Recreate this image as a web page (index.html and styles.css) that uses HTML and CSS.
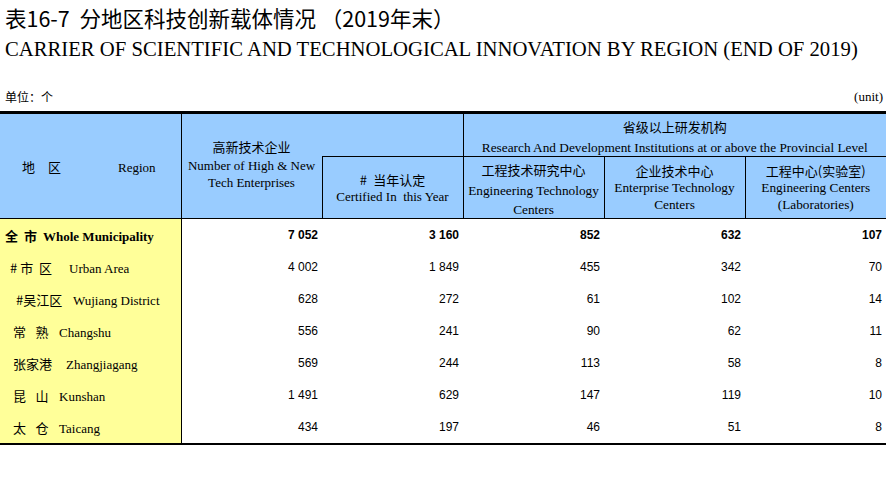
FILE: index.html
```html
<!DOCTYPE html>
<html lang="zh-CN">
<head>
<meta charset="utf-8">
<title>表16-7 分地区科技创新载体情况（2019年末）</title>
<link rel="stylesheet" href="styles.css">
</head>
<body>
<div class="page">
  <h1 class="title-cn">表16-7&nbsp;&nbsp;分地区科技创新载体情况&nbsp;（2019年末）</h1>
  <h2 class="title-en">CARRIER OF SCIENTIFIC AND TECHNOLOGICAL INNOVATION BY REGION (END OF 2019)</h2>
  <div class="unit-row">
    <span class="unit-cn">单位：个</span>
    <span class="unit-en">(unit)</span>
  </div>
  <table class="data">
    <colgroup>
      <col class="c-region">
      <col class="c-num">
      <col class="c-num">
      <col class="c-num">
      <col class="c-num">
      <col class="c-last">
    </colgroup>
    <thead>
      <tr class="h1">
        <th rowspan="2" class="h-region">
          <span class="hr-cn">地　区</span><span class="hr-en">Region</span>
        </th>
        <th rowspan="2" class="h-hightech">
          <span class="cn">高新技术企业</span>
          <span class="en">Number of High &amp; New</span>
          <span class="en">Tech Enterprises</span>
        </th>
        <th class="h-empty"></th>
        <th colspan="3" class="h-rd">
          <span class="cn">省级以上研发机构</span>
          <span class="en">Research And Development Institutions at or above the Provincial Level</span>
        </th>
      </tr>
      <tr class="h2">
        <th class="h-cert">
          <span class="cn">#&ensp;当年认定</span>
          <span class="en">Certified In&nbsp; this Year</span>
        </th>
        <th class="h-sub h-eng">
          <span class="cn">工程技术研究中心</span>
          <span class="en">Engineering Technology</span>
          <span class="en">Centers</span>
        </th>
        <th class="h-sub">
          <span class="cn">企业技术中心</span>
          <span class="en">Enterprise Technology</span>
          <span class="en">Centers</span>
        </th>
        <th class="h-sub">
          <span class="cn">工程中心(实验室)</span>
          <span class="en">Engineering Centers</span>
          <span class="en">(Laboratories)</span>
        </th>
      </tr>
    </thead>
    <tbody>
      <tr class="total">
        <td class="region r-total"><span class="rcn">全&nbsp;&nbsp;市</span><span class="ren">Whole Municipality</span></td>
        <td>7 052</td><td>3 160</td><td>852</td><td>632</td><td>107</td>
      </tr>
      <tr>
        <td class="region r-urban"><span class="rcn">#&nbsp;市&nbsp;&nbsp;区</span><span class="ren">Urban Area</span></td>
        <td>4 002</td><td>1 849</td><td>455</td><td>342</td><td>70</td>
      </tr>
      <tr>
        <td class="region r-wujiang"><span class="rcn">#吴江区</span><span class="ren">Wujiang District</span></td>
        <td>628</td><td>272</td><td>61</td><td>102</td><td>14</td>
      </tr>
      <tr>
        <td class="region r-two"><span class="rcn">常&ensp;&nbsp;熟</span><span class="ren">Changshu</span></td>
        <td>556</td><td>241</td><td>90</td><td>62</td><td>11</td>
      </tr>
      <tr>
        <td class="region r-zjg"><span class="rcn">张家港</span><span class="ren">Zhangjiagang</span></td>
        <td>569</td><td>244</td><td>113</td><td>58</td><td>8</td>
      </tr>
      <tr>
        <td class="region r-two"><span class="rcn">昆&ensp;&nbsp;山</span><span class="ren">Kunshan</span></td>
        <td>1 491</td><td>629</td><td>147</td><td>119</td><td>10</td>
      </tr>
      <tr>
        <td class="region r-two"><span class="rcn">太&ensp;&nbsp;仓</span><span class="ren">Taicang</span></td>
        <td>434</td><td>197</td><td>46</td><td>51</td><td>8</td>
      </tr>
    </tbody>
  </table>
</div>
</body>
</html>
```
FILE: styles.css
```css
html, body {
  margin: 0;
  padding: 0;
  background: #ffffff;
  color: #000000;
}

body {
  font-family: "Liberation Serif", "Times New Roman", serif;
}

.page {
  width: 886px;
  padding-top: 5px;
}

.title-cn {
  margin: 0 0 0 5px;
  font-family: "Noto Sans CJK SC", "Noto Sans", sans-serif;
  font-weight: normal;
  font-size: 21.5px;
  line-height: 25px;
  height: 25px;
  white-space: nowrap;
}

.title-en {
  margin: 7px 0 0 5px;
  font-family: "Liberation Serif", "Times New Roman", serif;
  font-weight: normal;
  font-size: 20.7px;
  line-height: 24px;
  height: 24px;
  white-space: nowrap;
}

.unit-row {
  display: flex;
  justify-content: space-between;
  align-items: center;
  height: 18px;
  margin-top: 27px;
  padding: 0 3px 0 5px;
  line-height: 18px;
}

.unit-cn {
  font-family: "Noto Sans CJK SC", sans-serif;
  font-size: 12px;
}

.unit-en {
  font-family: "Liberation Serif", serif;
  font-size: 13px;
}

.data {
  margin-top: 5px;
  width: 886px;
  table-layout: fixed;
  border-collapse: collapse;
  border-top: 3px solid #000;
  border-bottom: 2px solid #000;
}

.c-region { width: 181px; }
.c-num { width: 141px; }
.c-last { width: 141px; }

.data th {
  background: #99ccff;
  font-weight: normal;
  padding: 0;
  text-align: center;
  vertical-align: middle;
  border: 1px solid #000;
  border-top: none;
}

.data th:last-child,
.h2 th:last-child {
  border-right: none;
}

.data .h1 { height: 44px; }
.data .h2 { height: 62px; }

.data th .cn {
  display: block;
  font-family: "Noto Sans CJK SC", sans-serif;
  font-size: 13px;
  line-height: 17px;
}

.data th .en {
  display: block;
  font-family: "Liberation Serif", serif;
  font-size: 13.3px;
  line-height: 17px;
  white-space: nowrap;
}

.h-region {
  text-align: left !important;
  padding-left: 22px !important;
  border-left: none !important;
}

.hr-cn {
  font-family: "Noto Sans CJK SC", sans-serif;
  font-size: 13px;
}

.hr-en {
  margin-left: 57px;
  font-family: "Liberation Serif", serif;
  font-size: 13px;
}

.h-hightech {
  border-right: none !important;
  padding-bottom: 5px !important;
}

.h-hightech .cn {
  line-height: 21px !important;
}

.h-hightech .en {
  font-size: 13px !important;
}

.h-empty {
  border-left: none !important;
  border-bottom: 1px solid #000 !important;
}

.h-rd .cn { line-height: 25px !important; }

.h-cert {
  border-left: 1px solid #000 !important;
}

.h-cert .cn { line-height: 17px; }

.h-cert .en { font-size: 13px !important; }

.h-eng { padding-top: 2px !important; }
.h-eng .cn { line-height: 22px !important; }
.h-eng .en:nth-child(2) { line-height: 20px; }

.data td {
  height: 32px;
  padding: 0 4px 0 0;
  text-align: right;
  vertical-align: middle;
  font-family: "Liberation Sans", Arial, sans-serif;
  font-size: 12px;
  background: #ffffff;
  border: none;
  white-space: nowrap;
}

.data td.region {
  background: #ffff99;
  text-align: left;
  border-right: 1px solid #000;
  padding: 0;
  font-family: "Liberation Serif", serif;
  font-size: 13px;
}

.total td { font-weight: bold; }

.rcn {
  display: inline-block;
  font-family: "Noto Sans CJK SC", sans-serif;
  font-size: 13px;
}

.ren {
  font-family: "Liberation Serif", serif;
  font-size: 13px;
}

.r-total .rcn { margin-left: 5px; width: 38px; }
.r-urban .rcn { margin-left: 10px; width: 59px; }
.r-wujiang .rcn { margin-left: 16px; width: 57px; }
.r-two .rcn { margin-left: 13px; width: 46px; }
.r-zjg .rcn { margin-left: 13px; width: 53px; }
```
